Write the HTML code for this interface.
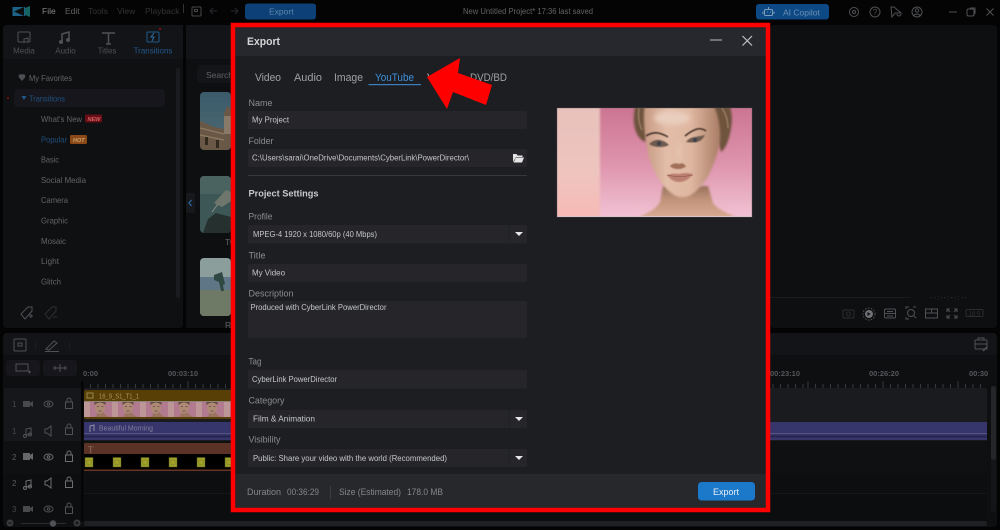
<!DOCTYPE html>
<html lang="en"><head><meta charset="utf-8"><title>Export</title>
<style>
html,body{margin:0;padding:0;background:#040404;width:1000px;height:530px;overflow:hidden}
svg{display:block}
text{font-family:"Liberation Sans",sans-serif}
.m{font-size:8.5px;fill:#626365}
.d{font-size:8.5px;fill:#333}
.t{font-size:8px;fill:#4f5052;text-anchor:middle}
.r{font-size:7.5px;fill:#55565a;font-weight:bold}
.l{font-size:9px;fill:#8b8c8e}
.v{font-size:8px;fill:#c4c5c6}
.tab{font-size:11px;fill:#a0a1a3}
.f{font-size:9px;fill:#85868a}
.ic{fill:none;stroke:#505154;stroke-width:1}
.ib{fill:none;stroke:#47484b;stroke-width:1}
.hi{stroke:#6d6e71}
</style></head><body>
<svg width="1000" height="530" viewBox="0 0 1000 530" xmlns="http://www.w3.org/2000/svg">
<defs>
<linearGradient id="bg" x1="0" y1="0" x2="0" y2="1"><stop offset="0" stop-color="#cc7592"/><stop offset=".5" stop-color="#dd93ac"/><stop offset="1" stop-color="#f1c2d3"/></linearGradient>
<linearGradient id="band" x1="0" y1="0" x2="0" y2="1"><stop offset="0" stop-color="#e7c1bb"/><stop offset=".6" stop-color="#efc4bf"/><stop offset="1" stop-color="#f7bab5"/></linearGradient>
<linearGradient id="skin" x1="0" y1="0" x2="1" y2="0"><stop offset="0" stop-color="#c69a82"/><stop offset=".3" stop-color="#e2bda8"/><stop offset=".62" stop-color="#dfb7a0"/><stop offset="1" stop-color="#a97d65"/></linearGradient>
<linearGradient id="neck" x1="0" y1="0" x2="0" y2="1"><stop offset="0" stop-color="#97705a"/><stop offset=".4" stop-color="#c09279"/><stop offset="1" stop-color="#d9ab94"/></linearGradient>
<linearGradient id="sky" x1="0" y1="0" x2="0" y2="1"><stop offset="0" stop-color="#3b5a6b"/><stop offset="1" stop-color="#4f6b72"/></linearGradient>
<clipPath id="pic"><rect x="557" y="108" width="195" height="109"/></clipPath>
<filter id="b1" x="-20%" y="-20%" width="140%" height="140%"><feGaussianBlur stdDeviation="1"/></filter>
<filter id="b2" x="-30%" y="-60%" width="160%" height="220%"><feGaussianBlur stdDeviation=".4"/></filter>
<filter id="b4" x="-50%" y="-50%" width="200%" height="200%"><feGaussianBlur stdDeviation="2.500"/></filter>
<filter id="soft" x="-5%" y="-5%" width="110%" height="110%"><feGaussianBlur stdDeviation=".25"/></filter>
<clipPath id="th1"><rect x="200" y="92" width="31" height="58" rx="4"/></clipPath>
<clipPath id="th2"><rect x="200" y="176" width="31" height="57" rx="4"/></clipPath>
<clipPath id="th3"><rect x="200" y="258" width="31" height="58" rx="4"/></clipPath>
<pattern id="faces" x="84" y="402" width="28" height="15" patternUnits="userSpaceOnUse">
<rect width="28" height="15" fill="#b27a8e"/><rect width="6" height="15" fill="#bd9798"/>
<path d="M11 15l3-4v-3h5l1 3 4 4z" fill="#9b7462"/><ellipse cx="16" cy="5.500" rx="5" ry="6" fill="#ae8a75"/><path d="M10.500 3q5.500-5 11 0v-3h-11z" fill="#5f4a3b"/><path d="M13 4.500h2M17.500 4.500h2M14.500 9h3" stroke="#5d4438" stroke-width=".7"/>
</pattern>
</defs>

<rect width="1000" height="530" fill="#040404"/>

<!-- top bar -->
<g filter="url(#soft)">
<rect x="12.500" y="7" width="12.500" height="9" fill="#1f6288"/><path d="M14 11.500l10-4.500v9z" fill="#0a0a0a"/><path d="M25 8l5-2v11l-5-2z" fill="#186464"/>
<text x="42" y="14" class="m" style="fill:#86878a">File</text>
<text x="65" y="14" class="m">Edit</text>
<text x="88" y="14" class="d">Tools</text>
<text x="117" y="14" class="d">View</text>
<text x="145" y="14" class="d">Playback</text>
<path d="M183.500 4v9" stroke="#333"/>
<rect x="192" y="7" width="9" height="9" rx="1" class="ib"/><rect x="194.500" y="9.500" width="3" height="2" class="ib"/>
<path d="M210 11h7m-7 0l3-3m-3 3l3 3M238 11h-7m7 0l-3-3m3 3l-3 3" class="ib" style="stroke:#2a2b2d"/>
<rect x="245" y="3.500" width="71" height="16" rx="3" fill="#0e4176"/>
<text x="269" y="14.500" style="font-size:8.500px;fill:#5e86ad">Export</text>
<text x="463" y="14" textLength="130" lengthAdjust="spacingAndGlyphs" class="m" style="font-size:8px">New Untitled Project* 17:36 last saved</text>
<rect x="756" y="4" width="73" height="15.500" rx="3" fill="#114a85"/>
<rect x="764.500" y="9.500" width="8" height="6" rx="1" fill="none" stroke="#7d9dbb"/><path d="M768.500 7v2.500M763 11.500v2.500M774 11.500v2.500M767 12h.8M770 12h.8" stroke="#7d9dbb"/>
<text x="783" y="15.500" style="font-size:8.500px;fill:#6c8fb2">AI Copilot</text>
<circle cx="854" cy="12" r="4.500" class="ic"/><circle cx="854" cy="12" r="1.500" class="ic"/>
<circle cx="875" cy="12" r="5" class="ic"/><text x="875" y="15" class="t">?</text>
<path d="M891 7l1 10 3-4h6l-7-6zM897 14a2 2 0 0 0 4 0" class="ic"/>
<circle cx="917" cy="12" r="5" class="ic"/><circle cx="917" cy="10.500" r="1.700" class="ic"/><path d="M913.500 15.500q3.500-3 7 0" class="ic"/>
<path d="M949 12h8" stroke="#505154"/><rect x="967" y="9" width="7" height="7" rx="1.500" class="ic"/><path d="M970 8h5v6" class="ic"/><path d="M986.500 8.500l7 7m0-7l-7 7" class="ic"/>
</g>

<!-- left panel -->
<rect x="3" y="25" width="180" height="303" rx="4" fill="#0f1012"/>
<path d="M3 59V29a4 4 0 0 1 4-4h176v34z" fill="#131417"/>
<g filter="url(#soft)">
<rect x="18" y="32" width="12" height="10" rx="1" class="ic"/><path d="M24 43v-4l4-1v4" class="ic"/>
<path d="M62 42v-8l7-2v8" stroke="#505154" stroke-width="1.500" fill="none"/><circle cx="61" cy="42" r="2" fill="#505154"/><circle cx="68" cy="40" r="2" fill="#505154"/>
<path d="M102 33h13M108.500 33v11M106 44h5" stroke="#505154" stroke-width="1.500" fill="none"/>
<rect x="147" y="32" width="12" height="10" rx="1" fill="none" stroke="#245a8c"/><path d="M154 33l-3 4h3l-2 4" fill="none" stroke="#2e6ea6"/>
<circle cx="160" cy="29" r="1" fill="#a01010"/>
<rect x="192" y="32" width="12" height="10" rx="1" class="ic"/><circle cx="198" cy="37" r="2.500" class="ic"/>
<text x="24" y="53.500" class="t">Media</text>
<text x="65.500" y="53.500" class="t">Audio</text>
<text x="107" y="53.500" class="t">Titles</text>
<text x="153" y="53.500" class="t" style="fill:#24578a">Transitions</text>
<text x="198.500" y="53.500" class="t">Effects</text>
<text x="226" y="53.500" class="t">O</text>
<path d="M22 81l-3-3.500c-1.500-2.500 2-4.500 3-2.500 1-2 4.500 0 3 2.500z" fill="#4f5053"/>
<text x="29" y="81" textLength="43" lengthAdjust="spacingAndGlyphs" class="m">My Favorites</text>
<rect x="14" y="89" width="151" height="18" rx="4" fill="#17181c"/>
<circle cx="8" cy="98" r="1" fill="#8e1010"/>
<path d="M21.500 96h5l-2.500 4z" fill="#22578c"/>
<text x="29" y="101.500" textLength="36" lengthAdjust="spacingAndGlyphs" class="m" style="fill:#204f7f">Transitions</text>
<text x="41" y="122" textLength="41" lengthAdjust="spacingAndGlyphs" class="m">What's New</text>
<rect x="85" y="114.500" width="17" height="8" rx="1.500" fill="#6a0b18"/><text x="87.500" y="121" style="font-size:5.500px;font-weight:bold;font-style:italic;fill:#c66">NEW</text>
<text x="41" y="142.500" textLength="26" lengthAdjust="spacingAndGlyphs" class="m" style="fill:#214f7e">Popular</text>
<rect x="70" y="135" width="17" height="9" rx="1.500" fill="#8a4a12"/><text x="73" y="142" style="font-size:5.500px;font-weight:bold;font-style:italic;fill:#c9a070">HOT</text>
<text x="41" y="162.500" textLength="18" lengthAdjust="spacingAndGlyphs" class="m">Basic</text>
<text x="41" y="183" textLength="45" lengthAdjust="spacingAndGlyphs" class="m">Social Media</text>
<text x="41" y="203" textLength="27" lengthAdjust="spacingAndGlyphs" class="m">Camera</text>
<text x="41" y="223.500" textLength="27" lengthAdjust="spacingAndGlyphs" class="m">Graphic</text>
<text x="41" y="244" textLength="25" lengthAdjust="spacingAndGlyphs" class="m">Mosaic</text>
<text x="41" y="264" textLength="18" lengthAdjust="spacingAndGlyphs" class="m">Light</text>
<text x="41" y="284.500" textLength="20" lengthAdjust="spacingAndGlyphs" class="m">Glitch</text>
<path d="M21 314l7-7 4 0 0 4-7 8z" class="ic"/><path d="M29 316h4m-2-2v4" class="ic"/>
<path d="M45 314l7-7 4 0 0 4-7 8z" class="ib" style="stroke:#2e2f31"/><path d="M53 317h4" class="ib" style="stroke:#2e2f31"/>
</g>
<rect x="176" y="68" width="4" height="230" rx="2" fill="#1a1b1f"/>

<!-- center library pane -->
<rect x="186" y="25" width="50" height="303" fill="#0e0f11"/>
<rect x="186" y="25" width="50" height="34" fill="#131417"/>
<rect x="197" y="65" width="40" height="18" rx="5" fill="#141518"/>
<text x="206" y="78" class="m">Search</text>
<g clip-path="url(#th1)" filter="url(#soft)">
<rect x="200" y="92" width="31" height="58" fill="url(#sky)"/>
<path d="M200 121l14 6 10 2v-15l3-8 4 3v41h-31z" fill="#6b5946"/>
<path d="M200 128l24 6M200 135l24 5" stroke="#8c7a62" stroke-width="1.200"/>
<path d="M224 116h7v18h-7z" fill="#887a66"/>
<rect x="205" y="137" width="3" height="8" fill="#33291f"/><rect x="216" y="140" width="3" height="8" fill="#33291f"/>
</g>
<g clip-path="url(#th2)">
<rect x="200" y="176" width="31" height="57" fill="#3d5757"/>
<rect x="200" y="176" width="31" height="18" fill="#4a6360"/>
<path d="M203 233l5-14 8-6 15 4v16z" fill="#26302f"/>
<path d="M214 203l12-13 5 2v9l-9 6z" fill="#6f776d"/><path d="M212 212l6-8" stroke="#8a8f85"/>
</g>
<g clip-path="url(#th3)">
<rect x="200" y="258" width="31" height="58" fill="#8b9e9c"/>
<rect x="200" y="277" width="31" height="15" fill="#5e7685"/>
<rect x="200" y="290" width="31" height="26" fill="#6f7a66"/>
<path d="M214 275l8-3 3 12-2 1 1 6-3 0-2-9-5-2z" fill="#2f4842"/>
</g>
<text x="225" y="245" class="m">Tw</text>
<text x="225" y="328" class="m">Re</text>
<rect x="186" y="193" width="9" height="20" rx="2" fill="#17181c"/><path d="M191.500 200l-2.500 3 2.500 3" fill="none" stroke="#2b6aa6" stroke-width="1.200"/>

<!-- preview right -->
<rect x="770" y="25" width="227" height="303" rx="4" fill="#0e0f11"/>
<path d="M770 297.500h141" stroke="#1a1b1e"/>
<text x="930" y="300" style="font-size:7px;fill:#3a3b3d;letter-spacing:1.200px">--:--:--:--</text>
<g filter="url(#soft)">
<rect x="843" y="310" width="11" height="8" rx="1" class="ib" style="stroke:#2c2d2f"/><circle cx="848.500" cy="314" r="2" class="ib" style="stroke:#2c2d2f"/>
<circle cx="869" cy="314" r="4" fill="#707174"/><circle cx="869" cy="314" r="6" fill="none" stroke="#555" stroke-dasharray="1.500 1.500"/><path d="M867.500 312v4l3-2z" fill="#101113"/>
<rect x="884.500" y="309" width="11" height="9" rx="1" class="ic"/><path d="M884.500 313.500h11M887 311.500h6M887 316h6" class="ic"/>
<circle cx="911" cy="313" r="3.500" class="ic"/><path d="M914 316l2 2M906 309v-2h3M916 307h-3M906 317v2h3" class="ic"/>
<rect x="925.500" y="309" width="12" height="9" class="ic"/><path d="M925.500 313h12M931.500 309v4" class="ic"/>
<path d="M947 309l3 3m7-3l-3 3m-7 6l3-3m7 3l-3-3M947 312v-3h3M957 312v-3h-3M947 315v3h3M957 315v3h-3" class="ic"/>
<rect x="966" y="309.500" width="17" height="7" rx="1" class="ib" style="stroke:#2c2d2f"/><text x="968.500" y="315.500" style="font-size:6px;fill:#2f3032">16:9</text>
</g>

<!-- timeline -->
<rect x="3" y="333" width="994" height="194" rx="4" fill="#0e0f11"/>
<path d="M3 355v-18a4 4 0 0 1 4-4h986a4 4 0 0 1 4 4v18z" fill="#131417"/>
<g filter="url(#soft)">
<rect x="14" y="339" width="12" height="12" rx="1" class="ic"/><rect x="18" y="343" width="4" height="3" class="ic"/>
<path d="M35.500 342v8" stroke="#1e1f22"/>
<path d="M46 349l8-8 3 2-8 7zM45 351.500h14" class="ic"/>
<path d="M69.500 342v8" stroke="#1e1f22"/>
<rect x="975" y="340" width="12" height="9" rx="1" class="ic"/><path d="M978 340v-2h6v2M975 344h12" class="ic"/><path d="M983 351l4-4" stroke="#505154" stroke-width="1.500"/>
<rect x="6" y="360" width="34" height="16" rx="3" fill="#17181b"/><rect x="16" y="364" width="12" height="7" class="ic"/><path d="M28 372h3m-1.500-1.500v3" class="ic"/>
<rect x="43" y="360" width="34" height="16" rx="3" fill="#17181b"/><path d="M53 368h14M60 364v8M55 366v4M65 366v4" class="ic"/>
<text x="83" y="376" class="r">0:00</text>
<text x="168" y="376" class="r">00:03:10</text>
<text x="770" y="376" class="r">00:23:10</text>
<text x="869" y="376" class="r">00:26:20</text>
<text x="969" y="376" class="r">00:30</text>
</g>
<path d="M83 388V381M90.500 388V384M98 388V384M105.500 388V384M113 388V384M120.500 388V384M128 388V384M135.500 388V384M143 388V384M150.500 388V384M158 388V384M165.500 388V384M173 388V384M180.500 388V384M188 388V381M195.500 388V384M203 388V384M210.500 388V384M218 388V384M225.500 388V384M233 388V384" stroke="#36373a"/>
<path d="M773 388V384M780.500 388V384M788 388V384M795.500 388V384M803 388V384M808 388V381M815.500 388V384M823 388V384M830.500 388V384M838 388V384M845.500 388V384M853 388V384M860.500 388V384M868 388V384M875.500 388V384M883 388V381M890.500 388V384M898 388V384M905.500 388V384M913 388V384M920.500 388V384M928 388V384M935.500 388V384M943 388V384M950.500 388V384M958 388V381M965.500 388V384M973 388V384M980.500 388V384" stroke="#36373a"/>

<rect x="4" y="388" width="77" height="53" fill="#16171a"/>
<rect x="4" y="441" width="77" height="33" fill="#0f1012"/>
<rect x="4" y="474" width="77" height="20" fill="#0d0e10"/>
<rect x="4" y="495" width="77" height="25" fill="#0d0e10"/>
<rect x="81" y="381" width="2.500" height="140" fill="#050505"/>
<rect x="84" y="388" width="903" height="53" fill="#1a1b1f"/>
<rect x="84" y="441" width="903" height="32" fill="#0f1012"/>
<rect x="84" y="473" width="903" height="20" fill="#0d0e10"/>
<path d="M84 493.500h903" stroke="#151618"/>
<rect x="84" y="494" width="903" height="26.500" fill="#0c0d0f"/>
<rect x="991" y="386" width="5" height="126" rx="2.500" fill="#141518"/><rect x="991" y="386" width="5" height="74" rx="2.500" fill="#24262a"/>

<!-- track headers -->
<g filter="url(#soft)">
<text x="12" y="407" class="t" style="text-anchor:start;fill:#454648">1</text><text x="12" y="434" class="t" style="text-anchor:start;fill:#454648">1</text><text x="12" y="460" class="t" style="text-anchor:start;fill:#5b5c5e">2</text><text x="12" y="486" class="t" style="text-anchor:start;fill:#5b5c5e">2</text><text x="12" y="512" class="t" style="text-anchor:start;fill:#454648">3</text>
<path d="M23 401h7v6h-7zM30 403l3-2v6l-3-2z" fill="#47484b"/>
<path d="M23 453h7v7h-7zM30 455l3-2v7l-3-2z" fill="#666769"/>
<path d="M23 506h7v6h-7zM30 508l3-2v6l-3-2z" fill="#47484b"/>
<path d="M26 429v6l5-1v-6z" class="ic"/><circle cx="25" cy="436" r="1.500" class="ic"/><circle cx="30" cy="434.500" r="1.500" class="ic"/>
<path d="M26 481v6l5-1v-6z" class="ic hi"/><circle cx="25" cy="488" r="1.500" class="ic hi"/><circle cx="30" cy="486.500" r="1.500" class="ic hi"/>
<ellipse cx="48.500" cy="404" rx="4.500" ry="3" class="ic"/><circle cx="48.500" cy="404" r="1.300" class="ic"/>
<ellipse cx="48.500" cy="457" rx="4.500" ry="3" class="ic hi"/><circle cx="48.500" cy="457" r="1.300" class="ic hi"/>
<ellipse cx="48.500" cy="509" rx="4.500" ry="3" class="ic"/><circle cx="48.500" cy="509" r="1.300" class="ic"/>
<path d="M45 429v4h2l4 3v-10l-4 3z" class="ic"/><path d="M45 481v4h2l4 3v-10l-4 3z" class="ic hi"/>
<rect x="65.500" y="402" width="7" height="6.500" class="ic"/><path d="M67 402v-2a2 2 0 0 1 4 0v2" class="ic"/>
<rect x="65.500" y="428" width="7" height="6.500" class="ic"/><path d="M67 428v-2a2 2 0 0 1 4 0v2" class="ic"/>
<rect x="65.500" y="455" width="7" height="6.500" class="ic hi"/><path d="M67 455v-2a2 2 0 0 1 4 0v2" class="ic hi"/>
<rect x="65.500" y="481" width="7" height="6.500" class="ic hi"/><path d="M67 481v-2a2 2 0 0 1 4 0v2" class="ic hi"/>
<rect x="65.500" y="507" width="7" height="6.500" class="ic"/><path d="M67 507v-2a2 2 0 0 1 4 0v2" class="ic"/>
</g>

<!-- clips -->
<rect x="84" y="390" width="160" height="29" rx="2" fill="#573f06"/>
<rect x="84" y="401" width="160" height="1" fill="#8b8478"/>
<rect x="84" y="402" width="160" height="15" fill="url(#faces)"/>
<text x="99" y="398.500" textLength="40" lengthAdjust="spacingAndGlyphs" style="font-size:7px;fill:#a89660">16_9_S1_T1_1</text>
<rect x="87" y="393" width="6" height="5" fill="none" stroke="#94854f"/>
<rect x="84" y="422" width="160" height="18" fill="#37366c"/>
<rect x="770" y="422" width="217" height="18" fill="#37366c"/>
<path d="M84 433.500h160M770 433.500h217" stroke="#5f5e85" stroke-width=".8"/>
<path d="M84 436.500h160M770 436.500h217" stroke="#26254e" stroke-width="2"/>
<path d="M90 432v-6l4-1v6" fill="none" stroke="#8f90a8"/><text x="99" y="430.500" textLength="54" lengthAdjust="spacingAndGlyphs" style="font-size:7.500px;fill:#7f7f9a">Beautiful Morning</text>
<rect x="84" y="443" width="160" height="11" rx="1" fill="#5a3226"/>
<text x="88" y="452.500" style="font-size:9px;fill:#8f7363;font-family:'Liberation Serif',serif">T</text>
<rect x="84" y="454" width="160" height="15.500" fill="#000"/>
<rect x="84" y="469.500" width="160" height="1.500" fill="#693324"/>
<g fill="#a3a32c" stroke="#55551a" stroke-width=".5">
<rect x="85" y="457.500" width="8" height="9.500"/><rect x="113" y="457.500" width="8" height="9.500"/><rect x="141" y="457.500" width="8" height="9.500"/><rect x="169" y="457.500" width="8" height="9.500"/><rect x="197" y="457.500" width="8" height="9.500"/><rect x="225" y="457.500" width="8" height="9.500"/>
</g>
<g fill="none" stroke="#7a7a20" stroke-width=".5">
<rect x="87" y="460" width="4" height="4.500"/><rect x="115" y="460" width="4" height="4.500"/><rect x="143" y="460" width="4" height="4.500"/><rect x="171" y="460" width="4" height="4.500"/><rect x="199" y="460" width="4" height="4.500"/><rect x="227" y="460" width="4" height="4.500"/>
</g>

<!-- zoom bar -->
<circle cx="10" cy="523" r="3.500" fill="#3a3b3e"/><path d="M8 523h4" stroke="#111"/>
<path d="M21 523.500h45" stroke="#2a2b2e"/><circle cx="53" cy="523.500" r="3.200" fill="#505154"/>
<circle cx="77" cy="523" r="3.500" fill="#3a3b3e"/><path d="M75 523h4M77 521v4" stroke="#111"/>
<rect x="84" y="521" width="903" height="5" rx="2" fill="#1e2024"/>

<!-- dialog -->
<rect x="233" y="25" width="535" height="485" fill="#1c1e22" stroke="#f00" stroke-width="4.500"/>
<rect x="235.500" y="27.500" width="530" height="28.500" fill="#26282d"/>
<rect x="235.500" y="474" width="530" height="33.500" fill="#26282c"/>
<g filter="url(#soft)">
<text x="247" y="45" textLength="33" lengthAdjust="spacingAndGlyphs" style="font-size:11px;font-weight:bold;fill:#d4d5d6">Export</text>
<path d="M710 40h12" stroke="#a3a4a6" stroke-width="1.200"/>
<path d="M742.500 36l9.500 9.500m0-9.500l-9.500 9.500" stroke="#c2c3c4" stroke-width="1.200" fill="none"/>

<text x="255" y="81" textLength="26" lengthAdjust="spacingAndGlyphs" class="tab">Video</text>
<text x="294" y="81" textLength="28" lengthAdjust="spacingAndGlyphs" class="tab">Audio</text>
<text x="334" y="81" textLength="29" lengthAdjust="spacingAndGlyphs" class="tab">Image</text>
<text x="375" y="81" textLength="39" lengthAdjust="spacingAndGlyphs" class="tab" style="fill:#3d8fd9">YouTube</text>
<text x="427" y="81" textLength="33" lengthAdjust="spacingAndGlyphs" class="tab">Vimeo</text>
<text x="470" y="81" textLength="37" lengthAdjust="spacingAndGlyphs" class="tab">DVD/BD</text>
<rect x="368.500" y="84" width="52.500" height="1.200" fill="#3c7fbf"/>

<text x="248.500" y="106" textLength="24" lengthAdjust="spacingAndGlyphs" class="l">Name</text>
<rect x="248" y="111" width="279" height="18" rx="2" fill="#26282c"/>
<text x="252" y="122.500" textLength="37" lengthAdjust="spacingAndGlyphs" class="v">My Project</text>
<text x="248.500" y="144" textLength="25" lengthAdjust="spacingAndGlyphs" class="l">Folder</text>
<rect x="248" y="149" width="279" height="18" rx="2" fill="#26282c"/>
<text x="252" y="160.500" textLength="217" lengthAdjust="spacingAndGlyphs" class="v">C:\Users\sarai\OneDrive\Documents\CyberLink\PowerDirector\</text>
<path d="M513 162v-8h3.500l1 1.500h5v1.500h-6.500l-3 5zM513.500 162.500l2.500-5h8l-2 5z" fill="#e4e4e4"/>
<path d="M248 175.500h279" stroke="#36383c"/>
<text x="248.500" y="196.500" textLength="70" lengthAdjust="spacingAndGlyphs" style="font-size:9.500px;font-weight:bold;fill:#c9cacb">Project Settings</text>

<text x="248.500" y="219.500" textLength="24" lengthAdjust="spacingAndGlyphs" class="l">Profile</text>
<rect x="248" y="225" width="279" height="18.500" rx="2" fill="#26282c"/>
<path d="M509.500 225v18.500" stroke="#1f2125"/>
<text x="253" y="237" textLength="124" lengthAdjust="spacingAndGlyphs" class="v">MPEG-4 1920 x 1080/60p (40 Mbps)</text>
<path d="M515 232h8l-4 4z" fill="#e6e6e6"/>

<text x="248.500" y="258.500" textLength="17" lengthAdjust="spacingAndGlyphs" class="l">Title</text>
<rect x="248" y="264" width="279" height="18" rx="2" fill="#26282c"/>
<text x="252" y="275.500" textLength="33" lengthAdjust="spacingAndGlyphs" class="v">My Video</text>

<text x="248.500" y="296.500" textLength="45" lengthAdjust="spacingAndGlyphs" class="l">Description</text>
<rect x="248" y="301" width="279" height="37" rx="2" fill="#26282c"/>
<text x="250.500" y="310" textLength="136" lengthAdjust="spacingAndGlyphs" class="v">Produced with CyberLink PowerDirector</text>

<text x="248.500" y="364.500" textLength="13" lengthAdjust="spacingAndGlyphs" class="l">Tag</text>
<rect x="248" y="370" width="279" height="18.500" rx="2" fill="#26282c"/>
<text x="252" y="382" textLength="85" lengthAdjust="spacingAndGlyphs" class="v">CyberLink PowerDirector</text>

<text x="248.500" y="403.500" textLength="36" lengthAdjust="spacingAndGlyphs" class="l">Category</text>
<rect x="248" y="410" width="279" height="18" rx="2" fill="#26282c"/>
<path d="M509.500 410v18" stroke="#1f2125"/>
<text x="253" y="421.500" textLength="62" lengthAdjust="spacingAndGlyphs" class="v">Film &amp; Animation</text>
<path d="M515 417h8l-4 4z" fill="#e6e6e6"/>

<text x="248.500" y="442.500" textLength="32" lengthAdjust="spacingAndGlyphs" class="l">Visibility</text>
<rect x="248" y="449" width="279" height="18" rx="2" fill="#26282c"/>
<path d="M509.500 449v18" stroke="#1f2125"/>
<text x="253" y="461" textLength="194" lengthAdjust="spacingAndGlyphs" class="v">Public: Share your video with the world (Recommended)</text>
<path d="M515 456h8l-4 4z" fill="#e6e6e6"/>

<text x="247" y="495" textLength="34" lengthAdjust="spacingAndGlyphs" class="f">Duration</text>
<text x="287" y="495" textLength="32" lengthAdjust="spacingAndGlyphs" class="f">00:36:29</text>
<path d="M330.500 486v13" stroke="#3c3e42"/>
<text x="339" y="495" textLength="62" lengthAdjust="spacingAndGlyphs" class="f">Size (Estimated)</text>
<text x="407" y="495" textLength="36" lengthAdjust="spacingAndGlyphs" class="f">178.0 MB</text>
<rect x="698" y="482" width="57" height="18.500" rx="3.500" fill="#1f78c9"/>
<text x="713" y="495" textLength="26" lengthAdjust="spacingAndGlyphs" style="font-size:9px;fill:#e8f1fa">Export</text>
</g>

<!-- preview image -->
<g clip-path="url(#pic)">
<rect x="557" y="108" width="195" height="109" fill="url(#bg)"/>
<rect x="555" y="106" width="45" height="113" fill="url(#band)" filter="url(#b1)"/>
<!-- neck and shoulders -->
<path d="M663 186l-3 16c-4 7-12 11-23 16h101c-11-5-21-9-25-15l-5-17z" fill="url(#neck)" filter="url(#b1)"/>
<!-- hair -->
<path d="M635 106c-2 10-2 20 2 28 2 4 5 7 9 8l2-36zM708 106l13 46c7-5 10-20 11-32 0-5-1-10-2-14z" fill="#6e533e" filter="url(#b1)"/>
<path d="M639 108c-1 8 0 16 3 22M722 108c4 6 6 12 6 20" stroke="#9c8166" stroke-width="1.400" fill="none" filter="url(#b2)"/>
<!-- face -->
<path d="M645 104c-2 12-1 24 1 36 1 10 3 22 9 32 4 9 12 19 19 23 5 3 10 3 15 1 8-4 17-14 22-26 4-9 8-20 9-30 1-12-2-26-7-36z" fill="url(#skin)" filter="url(#b1)"/>
<ellipse cx="672" cy="118" rx="18" ry="7" fill="#e9cdbd" filter="url(#b4)"/>
<!-- nose -->
<ellipse cx="679" cy="152" rx="2.500" ry="9" fill="#e6c5b0" filter="url(#b4)"/>
<path d="M670 166c3 4 13 4 16 0-3-3-4-3-7-2-3-1-6-1-9 2z" fill="#a27058" filter="url(#b2)"/>
<!-- brows -->
<path d="M646 136q6-4 12-3 5 1 10 4" stroke="#47312a" stroke-width="1.600" fill="none" filter="url(#b2)"/>
<path d="M685 136q6-5 12-7 5-1 9 2" stroke="#47312a" stroke-width="1.600" fill="none" filter="url(#b2)"/>
<!-- eyes -->
<path d="M649 144q5-5 11-4 5 1 9 5-4 2-9 2-7 0-11-3z" fill="#6e5a50" filter="url(#b2)"/>
<path d="M686 142q4-5 9-5 5-1 10-2-3 6-8 7-6 1-11 0z" fill="#6e5a50" filter="url(#b2)"/>
<circle cx="659" cy="143.500" r="2" fill="#39414a" filter="url(#b2)"/><circle cx="695" cy="140" r="2" fill="#39414a" filter="url(#b2)"/>
<!-- lips -->
<path d="M667 175q6-2 12-1 7-2 14 0-6 8-14 8-7 0-12-7z" fill="#bb7f71" filter="url(#b2)"/>
<path d="M667 175q12 3 26 0" stroke="#84504a" stroke-width=".6" fill="none"/>
<rect x="557" y="216" width="195" height="1" fill="#f2dfe4"/>
</g>
<rect x="557" y="108" width="195" height="109" fill="none" stroke="#6b5a5e" stroke-width=".4"/>

<!-- red arrow -->
<path d="M427 77L460 58 458 73 492 85 486 105 453 92 447 109z" fill="#f00"/>
</svg>
</body></html>
